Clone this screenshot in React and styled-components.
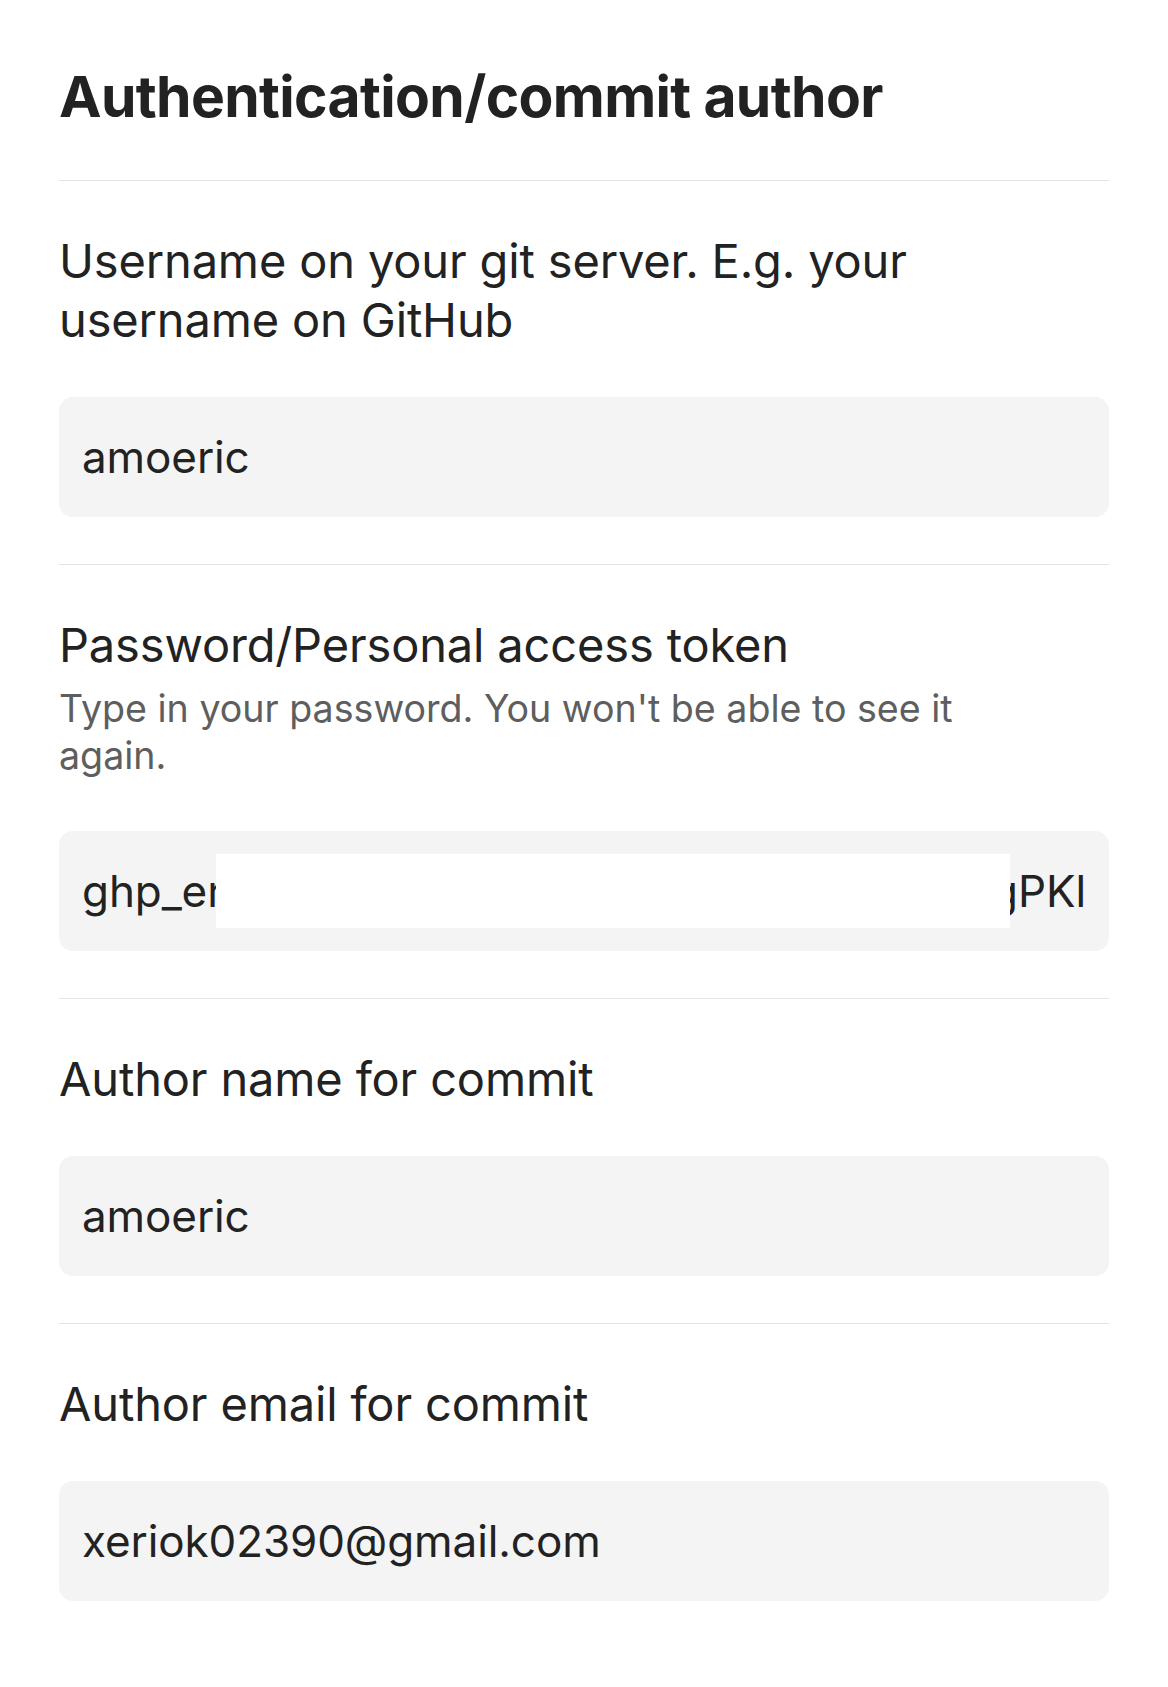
import React from "react";
import styled, { createGlobalStyle } from "styled-components";

const GlobalStyle = createGlobalStyle`
  html, body {
    margin: 0;
    padding: 0;
    background: #ffffff;
  }
  body {
    font-family: Inter, "Noto Sans", "Liberation Sans", sans-serif;
    color: #222222;
    -webkit-font-smoothing: antialiased;
  }
`;

const Page = styled.main`
  padding: 0 59px 80px;
`;

const Title = styled.h1`
  margin: 0;
  padding: 62px 0 48px;
  font-size: 57px;
  line-height: 70px;
  font-weight: 700;
  letter-spacing: -0.65px;
  color: #222222;
`;

const Divider = styled.hr`
  margin: 0;
  border: 0;
  height: 1px;
  background: #e3e3e3;
`;

const Section = styled.section`
  display: flex;
  flex-direction: column;
  padding: 50px 0 47px;
`;

const Label = styled.div`
  font-size: 47px;
  line-height: 59px;
  letter-spacing: -0.15px;
  color: #222222;
`;

const Hint = styled.p`
  margin: 11px 0 4px;
  max-width: 950px;
  font-size: 37.6px;
  line-height: 47px;
  color: #5e5e5e;
`;

const FieldBox = styled.div`
  position: relative;
  margin-top: 48px;
  height: 120px;
  padding: 0 23px;
  display: flex;
  align-items: center;
  justify-content: ${(p) => (p.$split ? "space-between" : "flex-start")};
  background: #f4f4f4;
  border-radius: 14px;
  overflow: hidden;
  font-size: 44px;
  line-height: 59px;
  letter-spacing: -0.1px;
  color: #222222;
  white-space: nowrap;
`;

const TokenPart = styled.span`
  flex: none;
`;

// white box that hides the middle of the token in the screenshot
const Redaction = styled.div`
  position: absolute;
  left: 157px;
  top: 23px;
  width: 794px;
  height: 74px;
  background: #ffffff;
`;

const fields = [
  {
    label: "Username on your git server. E.g. your username on GitHub",
    value: "amoeric",
  },
  {
    label: "Password/Personal access token",
    hint: "Type in your password. You won't be able to see it again.",
    token: ["ghp_er", "gPKl"],
  },
  { label: "Author name for commit", value: "amoeric" },
  { label: "Author email for commit", value: "xeriok02390@gmail.com" },
];

export default function App() {
  return (
    <>
      <GlobalStyle />
      <Page>
        <Title>Authentication/commit author</Title>
        <Divider />
        {fields.map((f, i) => (
          <React.Fragment key={f.label}>
            <Section>
              <Label>{f.label}</Label>
              {f.hint && <Hint>{f.hint}</Hint>}
              {f.token ? (
                <FieldBox $split>
                  <TokenPart>{f.token[0]}</TokenPart>
                  <TokenPart>{f.token[1]}</TokenPart>
                  <Redaction />
                </FieldBox>
              ) : (
                <FieldBox>{f.value}</FieldBox>
              )}
            </Section>
            {i < fields.length - 1 && <Divider />}
          </React.Fragment>
        ))}
      </Page>
    </>
  );
}
